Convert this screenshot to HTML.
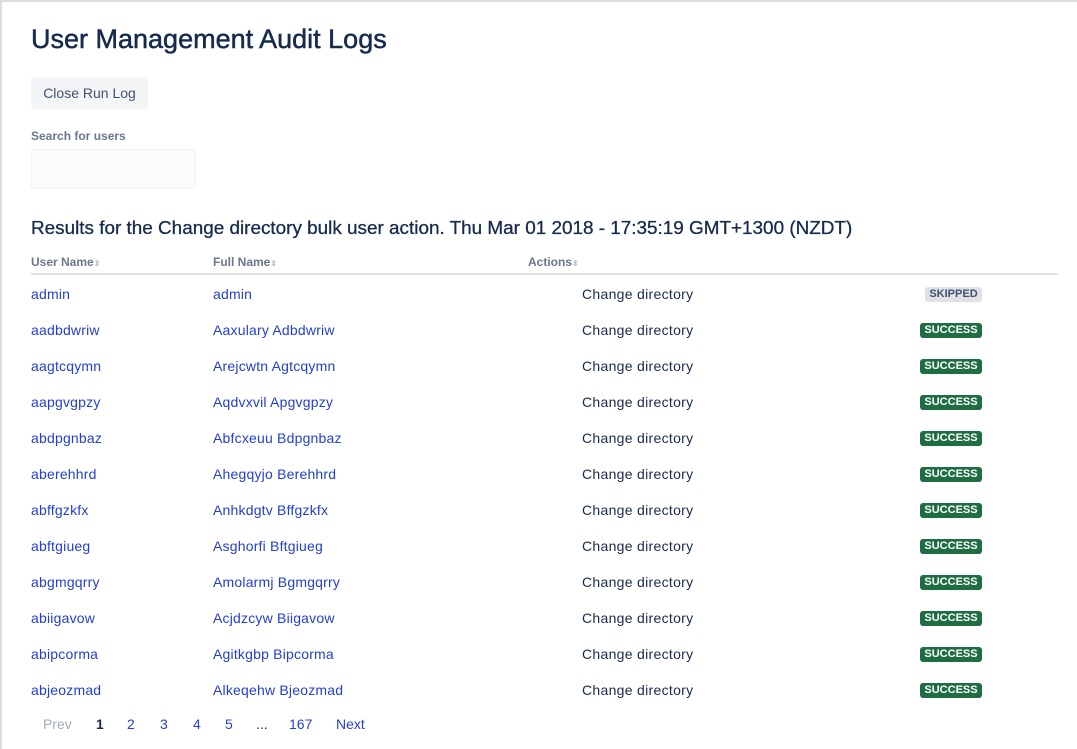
<!DOCTYPE html>
<html><head><meta charset="utf-8"><style>
*{margin:0;padding:0;box-sizing:border-box}
body{width:1077px;height:749px;background:#fff;font-family:"Liberation Sans",sans-serif;position:relative;overflow:hidden;color:#172b4d}
.frame{position:absolute;left:0;top:0;width:1077px;height:749px;border-top:2px solid #ddd;border-left:2px solid #ddd}
.a{position:absolute;white-space:nowrap}
h1{position:absolute;left:31px;top:24px;font-size:27px;font-weight:normal;color:#172b4d;-webkit-text-stroke:0.5px #172b4d}
.btn{position:absolute;left:31px;top:77px;width:117px;height:32px;background:#f4f5f7;border-radius:3px;font-size:14px;color:#42526e;line-height:32px;text-align:center}
.lbl{left:31px;top:129px;font-size:12px;font-weight:bold;color:#6b778c}
.inp{position:absolute;left:31px;top:149px;width:165px;height:40px;background:#fafbfc;border:1px solid #f1f2f4;border-radius:3px}
.res{left:31px;top:218px;font-size:18.9px;color:#172b4d;-webkit-text-stroke:0.3px #172b4d}
.th{top:255px;font-size:12px;font-weight:bold;color:#6b778c}
.th i{font-style:normal;color:#c1c7d0;font-size:8px}
.line{position:absolute;left:31px;top:273px;width:1027px;height:2px;background:#dfe1e6}
.l{font-size:14px;color:#2340d0;letter-spacing:0.2px}
.t{font-size:14px;color:#172b4d;letter-spacing:0.3px}
.bs{position:absolute;left:920px;width:62px;height:15px;background:#1f6e43;color:#fff;font-size:11px;font-weight:bold;text-align:center;line-height:15px;border-radius:3px}
.bk{left:925px;width:57px;background:#dfe1e6;color:#42526e}
.pg{top:716px;font-size:14px;color:#2340d0}
</style></head><body>
<div class="frame"></div>
<h1>User Management Audit Logs</h1>
<div class="btn">Close Run Log</div>
<div class="a lbl">Search for users</div>
<div class="inp"></div>
<div class="a res">Results for the Change directory bulk user action. Thu Mar 01 2018 - 17:35:19 GMT+1300 (NZDT)</div>
<div class="a th" style="left:31px">User Name<i>⬍</i></div>
<div class="a th" style="left:213px">Full Name<i>⬍</i></div>
<div class="a th" style="left:528px">Actions<i>⬍</i></div>
<div class="line"></div>

<div class="a l" style="left:31px;top:286px">admin</div><div class="a l" style="left:213px;top:286px">admin</div><div class="a t" style="left:582px;top:286px">Change directory</div><div class="bs bk" style="top:287px">SKIPPED</div>
<div class="a l" style="left:31px;top:322px">aadbdwriw</div><div class="a l" style="left:213px;top:322px">Aaxulary Adbdwriw</div><div class="a t" style="left:582px;top:322px">Change directory</div><div class="bs" style="top:323px">SUCCESS</div>
<div class="a l" style="left:31px;top:358px">aagtcqymn</div><div class="a l" style="left:213px;top:358px">Arejcwtn Agtcqymn</div><div class="a t" style="left:582px;top:358px">Change directory</div><div class="bs" style="top:359px">SUCCESS</div>
<div class="a l" style="left:31px;top:394px">aapgvgpzy</div><div class="a l" style="left:213px;top:394px">Aqdvxvil Apgvgpzy</div><div class="a t" style="left:582px;top:394px">Change directory</div><div class="bs" style="top:395px">SUCCESS</div>
<div class="a l" style="left:31px;top:430px">abdpgnbaz</div><div class="a l" style="left:213px;top:430px">Abfcxeuu Bdpgnbaz</div><div class="a t" style="left:582px;top:430px">Change directory</div><div class="bs" style="top:431px">SUCCESS</div>
<div class="a l" style="left:31px;top:466px">aberehhrd</div><div class="a l" style="left:213px;top:466px">Ahegqyjo Berehhrd</div><div class="a t" style="left:582px;top:466px">Change directory</div><div class="bs" style="top:467px">SUCCESS</div>
<div class="a l" style="left:31px;top:502px">abffgzkfx</div><div class="a l" style="left:213px;top:502px">Anhkdgtv Bffgzkfx</div><div class="a t" style="left:582px;top:502px">Change directory</div><div class="bs" style="top:503px">SUCCESS</div>
<div class="a l" style="left:31px;top:538px">abftgiueg</div><div class="a l" style="left:213px;top:538px">Asghorfi Bftgiueg</div><div class="a t" style="left:582px;top:538px">Change directory</div><div class="bs" style="top:539px">SUCCESS</div>
<div class="a l" style="left:31px;top:574px">abgmgqrry</div><div class="a l" style="left:213px;top:574px">Amolarmj Bgmgqrry</div><div class="a t" style="left:582px;top:574px">Change directory</div><div class="bs" style="top:575px">SUCCESS</div>
<div class="a l" style="left:31px;top:610px">abiigavow</div><div class="a l" style="left:213px;top:610px">Acjdzcyw Biigavow</div><div class="a t" style="left:582px;top:610px">Change directory</div><div class="bs" style="top:611px">SUCCESS</div>
<div class="a l" style="left:31px;top:646px">abipcorma</div><div class="a l" style="left:213px;top:646px">Agitkgbp Bipcorma</div><div class="a t" style="left:582px;top:646px">Change directory</div><div class="bs" style="top:647px">SUCCESS</div>
<div class="a l" style="left:31px;top:682px">abjeozmad</div><div class="a l" style="left:213px;top:682px">Alkeqehw Bjeozmad</div><div class="a t" style="left:582px;top:682px">Change directory</div><div class="bs" style="top:683px">SUCCESS</div>

<div class="a pg" style="left:43px;color:#a5adba">Prev</div>
<div class="a pg" style="left:96px;color:#172b4d;font-weight:bold">1</div>
<div class="a pg" style="left:127px">2</div>
<div class="a pg" style="left:160px">3</div>
<div class="a pg" style="left:193px">4</div>
<div class="a pg" style="left:225px">5</div>
<div class="a pg" style="left:256px;color:#172b4d">...</div>
<div class="a pg" style="left:289px">167</div>
<div class="a pg" style="left:336px">Next</div>
</body></html>
